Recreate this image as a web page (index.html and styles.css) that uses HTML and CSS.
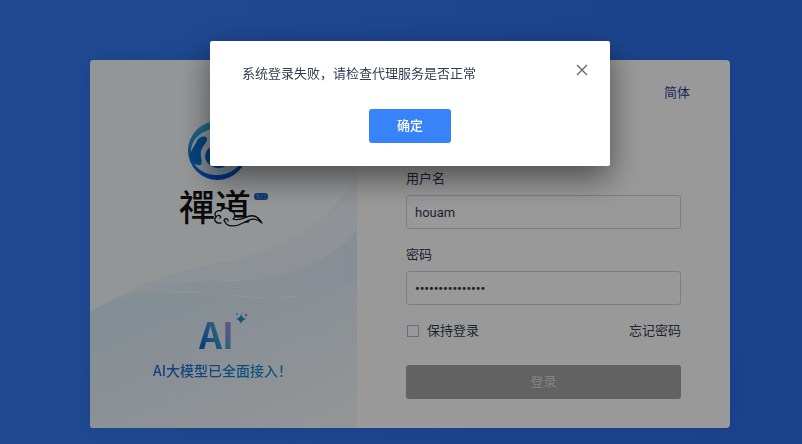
FILE: index.html
```html
<!DOCTYPE html>
<html lang="zh-CN">
<head>
    <meta charset="UTF-8">
    <meta name="viewport" content="width=device-width, initial-scale=1">
    <title>用户登录</title>
    <link rel="stylesheet" href="styles.css">
</head>

<body>

    <main class="login-panel">
        <section class="brand">
            <svg class="brand-bg" viewBox="0 0 267 368" preserveAspectRatio="none" aria-hidden="true">
                <defs>
                    <linearGradient id="band1" x1="0" y1="1" x2="1" y2="0">
                        <stop offset="0" stop-color="#e4f1fa"/>
                        <stop offset="1" stop-color="#f1f5fa"/>
                    </linearGradient>
                    <linearGradient id="band2" x1="0" y1="0" x2="1" y2="0">
                        <stop offset="0" stop-color="#e6f1f8"/>
                        <stop offset="1" stop-color="#e3edf9"/>
                    </linearGradient>
                    <linearGradient id="band3" x1="0" y1="0" x2="0.8" y2="1">
                        <stop offset="0" stop-color="#d6eefa"/>
                        <stop offset="0.5" stop-color="#e6f0f8"/>
                        <stop offset="1" stop-color="#f5f9fc"/>
                    </linearGradient>
                </defs>
                <path fill="url(#band1)" d="M0 252C48 223 92 208 133 202C196 191 246 157 267 113V368H0Z"/>
                <path fill="url(#band2)" d="M0 252C40 228 80 221 130 221C190 221 238 205 267 170V368H0Z"/>
                <path fill="url(#band3)" d="M0 252C30 234 70 228 110 233C150 239 215 242 267 222V368H0Z"/>
                <path fill="none" stroke="#fff" stroke-opacity="0.6" d="M74 232H110M130 221Q150 221 170 218M142 235Q160 239 180 238M190 238L208 236"/>
            </svg>

            <!-- logo -->
            <svg class="logo" viewBox="0 0 90 108" role="img" aria-label="禪道">
                <defs>
                    <linearGradient id="ring" x1="0.2" y1="0" x2="0.6" y2="1">
                        <stop offset="0" stop-color="#49bddc"/>
                        <stop offset="0.4" stop-color="#127fd6"/>
                        <stop offset="1" stop-color="#0450df"/>
                    </linearGradient>
                    <linearGradient id="swirl" x1="0" y1="0" x2="1" y2="1">
                        <stop offset="0" stop-color="#e9f5f9"/>
                        <stop offset="1" stop-color="#b9dcee"/>
                    </linearGradient>
                </defs>
                <circle cx="38.5" cy="31.5" r="29.5" fill="url(#ring)"/>
                <path fill="url(#swirl)" d="M39 9C24 10 13 19 12 31C11 46 23 56 38 56C53 56 64 46 64 33C64 19 53 9 39 9Z"/>
                <path fill="#0a71d5" d="M17 24C19 18 25 16 28 19C29 23 24 26 22 32C21 38 24 42 22 46C17 47 12 43 11 38C11 33 14 29 17 24Z"/>
                <path fill="#0867cb" d="M41 25C32 25 26 31 26 38C27 45 34 50 42 49C49 48 54 40 50 32C47 26 45 25 41 25Z"/>
                <path fill="#d8edf5" d="M41 26C35 26 33 32 37 35C42 38 47 31 41 26Z"/>
                <text class="logo-text" x="0" y="102">禪道</text>
                <path fill="#f5f9fb" stroke="#111" stroke-width="1.3" stroke-linecap="round" stroke-linejoin="round" d="M42 104C37 105 34 101 37 98C34 93 39 91 42 92C43 88 50 88 51 92C56 92 57 98 54 100C64 103 67 95 75 97Q79 98 83 104C75 97 70 101 64 104C57 108 48 108 46 103C43 100 49 98 49 102M37 98C39 95 43 97 41 99"/>
                <rect x="75" y="74" width="14" height="7" rx="3" fill="#1f61ba"/>
                <path fill="none" stroke="#9fc5ed" stroke-width="0.5" d="M77 76H80L78 78M82 76H84M85 76H87M78 79H80M81 79H83M85 79H87"/>
            </svg>

            <div class="promo">
                <div class="promo-mark">
                    AI
                    <svg class="sparkle" viewBox="0 0 14 14" aria-hidden="true">
                        <path fill="#238fd0" d="M7 2Q8 6 12 7Q8 8 7 12Q6 8 2 7Q6 6 7 2Z"/>
                        <path fill="#238fd0" d="M7 4L10 7L7 10L4 7Z"/>
                        <circle cx="12" cy="3" r="1.2" fill="#936bd4"/>
                        <circle cx="3" cy="2" r="1" fill="#4aa9d3"/>
                        <circle cx="9" cy="1" r="0.6" fill="#4aa9d3"/>
                    </svg>
                </div>
                <p class="promo-text">AI大模型已全面接入！</p>
            </div>
        </section>

        <section class="login">
            <div class="lang-bar">
                <button type="button" class="lang">简体</button>
            </div>
            <form class="login-form">
                <div class="field">
                    <label for="account">用户名</label>
                    <input type="text" id="account" name="account" value="houam">
                </div>
                <div class="field">
                    <label for="password">密码</label>
                    <input type="password" id="password" name="password" value="abcdefghijklmno">
                </div>
                <div class="options">
                    <label class="keep"><input type="checkbox" name="keep">保持登录</label>
                    <a href="#">忘记密码</a>
                </div>
                <button type="submit" class="submit" disabled>登录</button>
            </form>
        </section>
    </main>

    <div class="overlay">
        <div class="modal" role="alertdialog" aria-modal="true" aria-describedby="message">
            <p class="message" id="message">系统登录失败，请检查代理服务是否正常</p>
            <button type="button" class="confirm">确定</button>
            <button type="button" class="close" aria-label="关闭">
                <svg viewBox="0 0 12 12"><path fill="none" stroke="#656b76" stroke-width="1.4" d="M1 1L11 11M11 1L1 11"/></svg>
            </button>
        </div>
    </div>

</body>
</html>
```
FILE: styles.css
```css
* {
    box-sizing: border-box;
}
body {
    margin: 0;
    min-height: 100vh;
    padding: 60px 16px 16px 34px;
    background: linear-gradient(100deg, #347bf5, #2d6ee9);
    color: #313c52;
    font: 13px/20px Roboto, "Noto Sans CJK SC", sans-serif;
}
p {
    margin: 0;
}
button,
input {
    font: inherit;
    color: inherit;
}
button {
    border: 0;
    border-radius: 3px;
}

.login-panel {
    display: grid;
    grid-template-columns: 267fr 373fr;
    max-width: 640px;
    margin: 0 auto;
    overflow: hidden;
    background-color: #fff;
    border-radius: 4px;
    box-shadow: 0 0 20px rgba(0, 0, 0, 0.08);
}

/* left side */
.brand {
    position: relative;
    display: flex;
    flex-direction: column;
    align-items: center;
    justify-content: space-between;
    padding: 59px 16px 48px;
    background-color: #f6fafc;
}
.brand-bg {
    position: absolute;
    top: 0;
    left: 0;
    width: 100%;
    height: 100%;
}
.logo {
    position: relative;
    width: 90px;
    height: 108px;
    overflow: visible;
}
.logo-text {
    font: 500 36px "Noto Sans CJK TC", sans-serif;
    fill: #111;
}
.promo {
    position: relative;
    display: flex;
    flex-direction: column;
    align-items: center;
    gap: 9px;
    margin-right: 2px;
}
.promo-mark {
    position: relative;
    margin-right: 12px;
    font: bold 36px/36px "Noto Sans CJK SC", sans-serif;
    color: transparent;
    background: linear-gradient(60deg, #1768d0 15%, #4aa3d5 55%, #a98be0 80%);
    background-clip: text;
    -webkit-background-clip: text;
}
.sparkle {
    position: absolute;
    top: -3px;
    right: -14px;
    width: 14px;
    height: 14px;
}
.promo-text {
    font-family: "Noto Sans CJK SC", sans-serif;
    font-size: 14px;
    font-weight: 500;
    color: transparent;
    background: linear-gradient(90deg, #1f66cf, #1590cf);
    background-clip: text;
    -webkit-background-clip: text;
}

/* right side */
.lang-bar {
    display: flex;
    justify-content: flex-end;
    padding: 23px 40px 0;
}
.lang {
    padding: 0;
    background: none;
    color: #28459b;
}
.login-form {
    display: flex;
    flex-direction: column;
    gap: 16px;
    padding: 66px 49px 29px;
}
.field {
    display: flex;
    flex-direction: column;
    gap: 6px;
}
.field input {
    width: 100%;
    height: 34px;
    padding: 0 8px;
    background-color: #fff;
    border: 1px solid #d0d0e4;
    border-radius: 3px;
}
.field input[type="password"] {
    font-weight: bold;
}
.options {
    display: flex;
    justify-content: space-between;
}
.options a {
    color: inherit;
    text-decoration: none;
}
.keep {
    display: flex;
    align-items: center;
    gap: 8px;
}
.keep input {
    appearance: none;
    width: 12px;
    height: 12px;
    margin: 0 0 0 1px;
    border: 1px solid #b4b8c4;
}
.submit {
    height: 34px;
    margin-top: 8px;
    background-color: #a3a3a3;
    color: #dcdcdc;
}

/* message box */
.overlay {
    position: fixed;
    inset: 0;
    padding: 41px 16px 0 34px;
    background-color: rgba(0, 0, 0, 0.4);
}
.modal {
    position: relative;
    display: flex;
    flex-direction: column;
    gap: 25px;
    max-width: 400px;
    margin: 0 auto;
    padding: 23px 32px;
    background-color: #fff;
    border-radius: 2px;
    box-shadow: 0 12px 32px rgba(0, 0, 0, 0.5);
}
.message {
    padding-right: 32px;
}
.confirm {
    align-self: center;
    height: 34px;
    padding: 0 28px;
    background-color: #3883fa;
    color: #fff;
    font-weight: 500;
}
.close {
    position: absolute;
    top: 18px;
    right: 17px;
    display: flex;
    padding: 5px;
    background: none;
}
.close svg {
    width: 12px;
    height: 12px;
}
```
